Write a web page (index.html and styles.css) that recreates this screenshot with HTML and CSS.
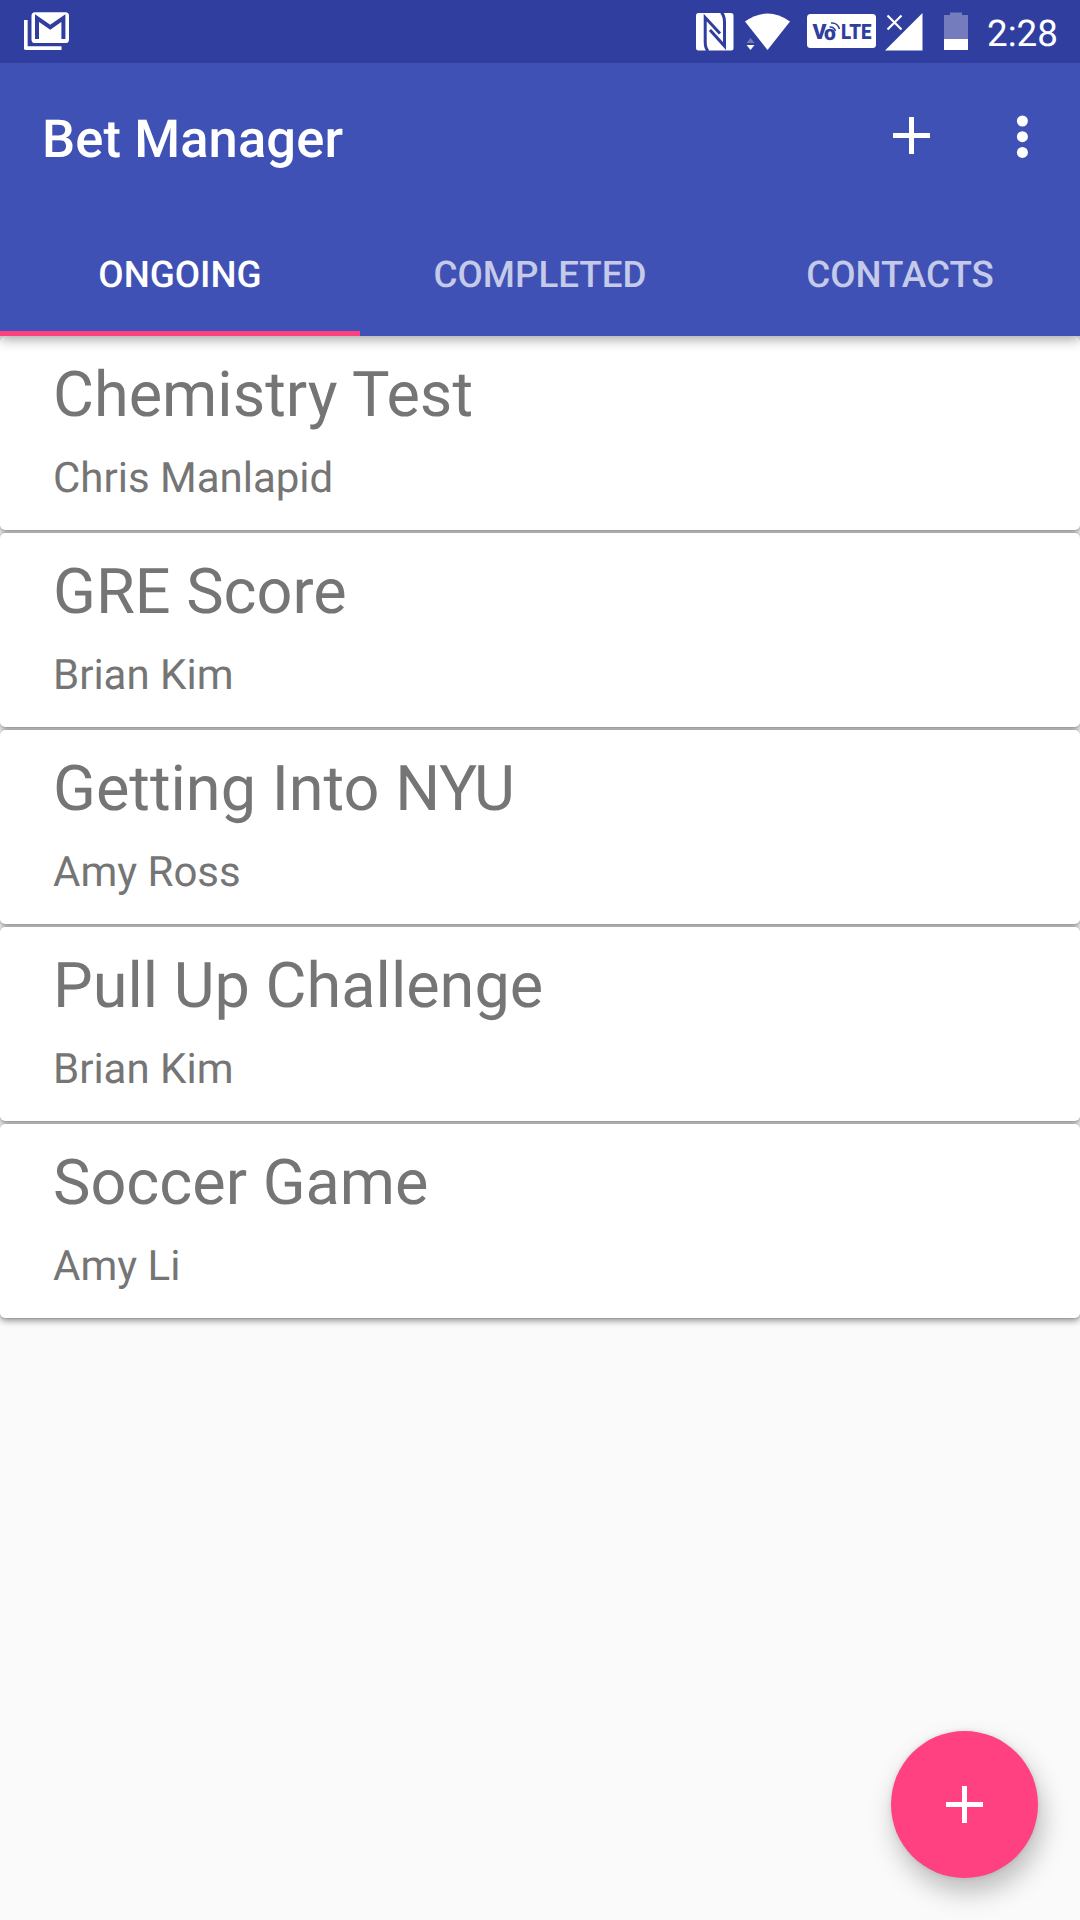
FILE: index.html
```html
<!DOCTYPE html>
<html lang="en">
<head>
<meta charset="utf-8">
<title>Bet Manager</title>
<link rel="stylesheet" href="styles.css">
</head>
<body>
<div class="screen">
  <header class="header">
    <div class="status">
      <svg class="mail" width="46" height="40" viewBox="24 12 46 40"><path d="M25.8 20V48.2H61.5" fill="none" stroke="#fff" stroke-width="3.7" stroke-linejoin="round"/><rect x="31.5" y="12.3" width="37.5" height="30.7" rx="3.6" fill="#fff"/><path d="M37 39V18L50.2 27.2L63.4 18V39" fill="none" stroke="#303f9f" stroke-width="4"/></svg>
      <svg class="nfc" width="38" height="40" viewBox="696 12 38 40"><rect x="696" y="13" width="37.5" height="37.5" rx="2.5" fill="#fff"/><path d="M708 51Q705.200 48 705.200 42V17.500L720 33.500" fill="none" stroke="#303f9f" stroke-width="3"/><path d="M721.500 12.500Q724.500 16 724.500 22V46L710 30" fill="none" stroke="#303f9f" stroke-width="3"/></svg>
      <svg class="wifi" width="46" height="40" viewBox="745 12 46 40"><path d="M745 21.5Q767.500 5.500 790 21.5L767.500 50Z" fill="#fff"/><path d="M746.5 43L750.500 38L754.500 43Z" fill="#7179bd"/><path d="M746.500 45H754.500L750.500 50Z" fill="#fff"/></svg>
      <svg class="volte" width="69" height="40" viewBox="807 12 69 40"><rect x="807" y="14" width="69" height="34" rx="3.500" fill="#fff"/><g class="volte-text"><text x="812.500" y="39" textLength="14" lengthAdjust="spacingAndGlyphs">V</text><text x="824" y="39.500">o</text><text x="841" y="39" textLength="30.500" lengthAdjust="spacingAndGlyphs">LTE</text></g><path d="M829.500 27Q834 26.500 835.500 31M831 23Q837.500 22.500 839.500 29" fill="none" stroke="#303f9f" stroke-width="1.6"/></svg>
      <svg class="signal" width="38" height="40" viewBox="885 12 38 40"><path d="M922.500 13V50.500H885Z" fill="#fff"/><path d="M887.500 15.500L901.500 29.500M901.500 15.500L887.500 29.500" stroke="#fff" stroke-width="2.200"/></svg>
      <svg class="battery" width="24" height="40" viewBox="944 12 24 40"><path d="M950 12.500H962V15H968V39H944V15H950Z" fill="#757cbd"/><path d="M944 39H968V50H944Z" fill="#fff"/></svg>
      <span class="clock">2:28</span>
    </div>
    <div class="toolbar">
      <h1 class="app-title">Bet Manager</h1>
      <svg class="add" width="38" height="38" viewBox="0 0 38 38"><path d="M0 18.500H37M18.500 0V37" stroke="#fff" stroke-width="5"/></svg>
      <svg class="more" width="12" height="44" viewBox="0 0 12 44"><g fill="#fff"><circle cx="6.400" cy="6" r="5.500"/><circle cx="6.400" cy="21.700" r="5.500"/><circle cx="6.400" cy="37.400" r="5.500"/></g></svg>
    </div>
    <nav class="tabs">
      <div class="tab active">ONGOING</div>
      <div class="tab">COMPLETED</div>
      <div class="tab">CONTACTS</div>
    </nav>
  </header>
  <main class="list">
    <article class="card"><h2 class="name">Chemistry Test</h2><p class="person">Chris Manlapid</p></article>
    <article class="card"><h2 class="name">GRE Score</h2><p class="person">Brian Kim</p></article>
    <article class="card"><h2 class="name">Getting Into NYU</h2><p class="person">Amy Ross</p></article>
    <article class="card"><h2 class="name">Pull Up Challenge</h2><p class="person">Brian Kim</p></article>
    <article class="card"><h2 class="name">Soccer Game</h2><p class="person">Amy Li</p></article>
  </main>
  <div class="fab"><svg width="37" height="37" viewBox="0 0 37 37"><path d="M0 18.500H37M18.500 0V37" stroke="#fff" stroke-width="5"/></svg></div>
</div>
</body>
</html>
```
FILE: styles.css
```css
* { box-sizing: border-box; margin: 0; padding: 0; }
body { font-family: Roboto, "Liberation Sans", sans-serif; background: #fafafa; text-rendering: geometricPrecision; }
svg { display: block; flex: none; }
.screen { position: relative; width: 1080px; height: 1920px; background: #fafafa; overflow: hidden; }
.header { position: relative; z-index: 1; height: 336px; background: #3f51b5; color: #fff; box-shadow: 0 3px 12px rgba(0, 0, 0, .38); }
.status { display: flex; height: 63px; padding: 12px 0 0 24px; background: #303f9f; }
.nfc { margin-left: 626px; }
.wifi { margin-left: 11px; }
.volte { margin-left: 16px; }
.volte-text { font-size: 21px; font-weight: 900; fill: #303f9f; }
.signal { margin-left: 9px; }
.battery { margin-left: 21px; }
.clock { margin-left: 19px; font-size: 36.75px; line-height: 43px; }
.toolbar { display: flex; height: 147px; padding-left: 42px; }
.app-title { width: 851px; padding-top: 45px; font-size: 52.5px; line-height: 62px; font-weight: 500; letter-spacing: .1px; }
.add { margin-top: 54px; }
.more { margin: 52px 0 0 85px; }
.tabs { display: grid; grid-template-columns: repeat(3, 1fr); height: 126px; }
.tab { padding-top: 43px; border-bottom: 5px solid transparent; text-align: center; font-size: 36.75px; line-height: 43px; font-weight: 500; color: #c5cae9; }
.active { color: #fff; border-color: #ff4081; }
.list { display: flex; flex-direction: column; gap: 3px; }
.card { height: 194px; padding: 23px 53px 0; border-radius: 5px; background: #fff; color: #757575; box-shadow: 0 3px 6px rgba(0, 0, 0, .4), 0 0 2px rgba(0, 0, 0, .25); }
.name { font-size: 63px; line-height: 74px; font-weight: 400; }
.person { margin-top: 21px; font-size: 42px; line-height: 49px; }
.fab { position: absolute; left: 891px; top: 1731px; display: flex; align-items: center; justify-content: center; width: 147px; height: 147px; border-radius: 50%; background: #ff4081; box-shadow: 4px 14px 26px rgba(0, 0, 0, .25), 0 0 5px rgba(0, 0, 0, .1); }
```
